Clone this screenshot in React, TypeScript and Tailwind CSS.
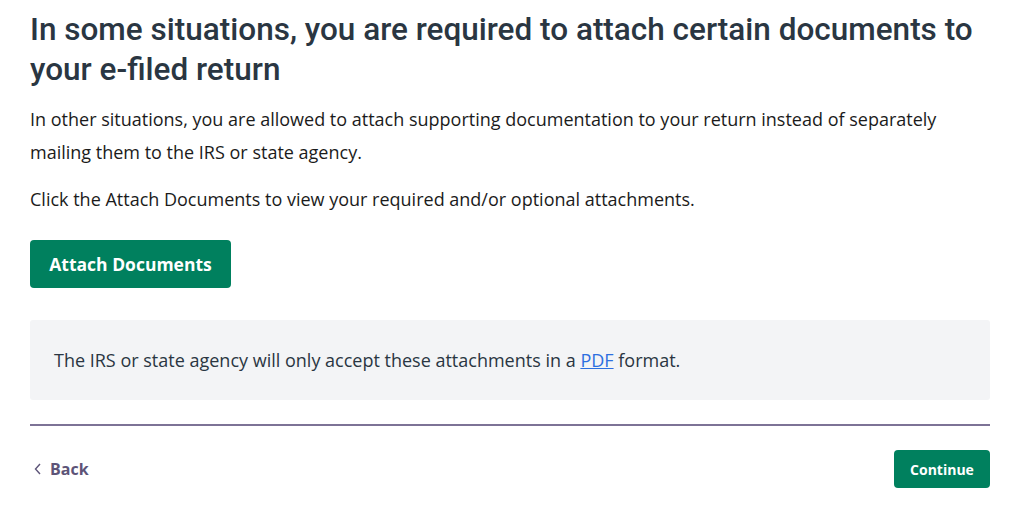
import React from "react";

export default function App() {
  return (
    <div className="w-[1024px] h-[514px] bg-white px-[30px] pt-[10px] font-['Open_Sans',sans-serif] text-[#1b1b1b]">
      <div className="w-[960px]">
        <h1 className="font-['Roboto',sans-serif] font-medium text-[31.5px] leading-[40px] text-[#2a3642]">
          In some situations, you are required to attach certain documents to your e-filed return
        </h1>
        <p className="mt-[13px] text-[18px] leading-[33px]">
          In other situations, you are allowed to attach supporting documentation to your return instead of separately mailing them to the IRS or state agency.
        </p>
        <p className="mt-[14px] text-[18px] leading-[33px]">
          Click the Attach Documents to view your required and/or optional attachments.
        </p>
        <button className="mt-[24px] h-[48px] w-[201px] rounded-[4px] bg-[#00805e] text-white font-bold text-[17.5px]">
          Attach Documents
        </button>
        <div className="mt-[32px] h-[80px] rounded-[3px] bg-[#f3f4f6] flex items-center px-[24px] text-[18px] text-[#2a3642]">
          <span>
            The IRS or state agency will only accept these attachments in a{" "}
            <a href="#" className="text-[#2c6fe0] underline">PDF</a> format.
          </span>
        </div>
        <div className="mt-[24px] h-[2px] bg-[#7d7396]" />
        <div className="mt-[24px] flex items-center justify-between">
          <button className="flex items-center gap-[7px] pl-[3px] text-[#5d5478] font-bold text-[16px]">
            <svg width="10" height="14" viewBox="0 0 10 14" fill="none" stroke="#5d5478" strokeWidth="1.4">
              <path d="M7 2 L2.5 7 L7 12" />
            </svg>
            Back
          </button>
          <button className="h-[38px] w-[96px] rounded-[4px] bg-[#00805e] text-white font-bold text-[14px]">
            Continue
          </button>
        </div>
      </div>
    </div>
  );
}
